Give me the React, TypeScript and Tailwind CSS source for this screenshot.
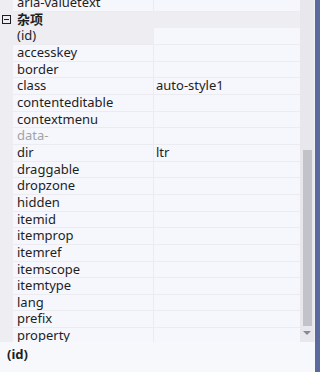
import React from 'react';

type Prop = { name: string; value?: string; disabled?: boolean; selected?: boolean };

const props: Prop[] = [
  { name: '(id)', selected: true },
  { name: 'accesskey' },
  { name: 'border' },
  { name: 'class', value: 'auto-style1' },
  { name: 'contenteditable' },
  { name: 'contextmenu' },
  { name: 'data-', disabled: true },
  { name: 'dir', value: 'ltr' },
  { name: 'draggable' },
  { name: 'dropzone' },
  { name: 'hidden' },
  { name: 'itemid' },
  { name: 'itemprop' },
  { name: 'itemref' },
  { name: 'itemscope' },
  { name: 'itemtype' },
  { name: 'lang' },
  { name: 'prefix' },
  { name: 'property' },
];

const font = { fontFamily: '"Noto Sans", "Noto Sans CJK SC", sans-serif' };

function Row({ p }: { p: Prop }) {
  return (
    <div className="flex h-[16.67px] shrink-0">
      <div className="w-[13px] shrink-0 bg-[#eeeef2]" />
      <div
        className={`w-[140px] shrink-0 whitespace-nowrap border-b border-[#ebebf0] pl-[4px] leading-[15px] ${
          p.selected ? 'bg-[#eeeef2]' : 'bg-[#f5f7fd]'
        } ${p.disabled ? 'text-[#a2a4a8]' : 'text-[#1e1e1e]'}`}
      >
        {p.name}
      </div>
      <div className="flex-1 whitespace-nowrap border-b border-l border-[#ebebf0] bg-[#f5f7fd] pl-[2px] leading-[15px] text-[#1e1e1e]">
        {p.value}
      </div>
    </div>
  );
}

export default function App() {
  return (
    <div className="flex h-[372px] w-[320px] overflow-hidden bg-[#f5f7fd] text-[13px]" style={font}>
      <div className="flex w-[315px] flex-col">
        <div className="flex h-[342px] shrink-0 overflow-hidden">
          {/* Property grid */}
          <div className="flex w-[300px] flex-col">
            <div className="-mt-[5px] flex flex-col">
              <Row p={{ name: 'aria-valuetext' }} />
              {/* Category */}
              <div className="flex h-[16.67px] shrink-0 items-center bg-[#eeeef2]">
                <div className="flex w-[13px] shrink-0 justify-center">
                  <div className="flex h-[9px] w-[9px] items-center justify-center border border-[#1e1e1e]">
                    <div className="h-px w-[5px] bg-[#1e1e1e]" />
                  </div>
                </div>
                <span className="pl-[4px] font-bold leading-[15px] text-[#1e1e1e]">杂项</span>
              </div>
              {props.map((p) => (
                <Row key={p.name} p={p} />
              ))}
            </div>
          </div>
          {/* Scrollbar */}
          <div className="flex w-[15px] shrink-0 flex-col items-center border-r border-[#f0f0f4] bg-[#e8e8ec]">
            <div className="mt-[150px] h-[176px] w-[9px] bg-[#c2c3c9]" />
            <div className="mt-[5px] h-0 w-0 border-x-[4px] border-t-[4px] border-x-transparent border-t-[#868999]" />
          </div>
        </div>
        {/* Description */}
        <div className="flex-1 bg-[#f7f8fc] pl-[7px] pt-[4px] font-bold leading-[17px] text-[#1e1e1e]">(id)</div>
      </div>
      <div className="w-[5px] shrink-0 bg-[#5b6a9e]" />
    </div>
  );
}
